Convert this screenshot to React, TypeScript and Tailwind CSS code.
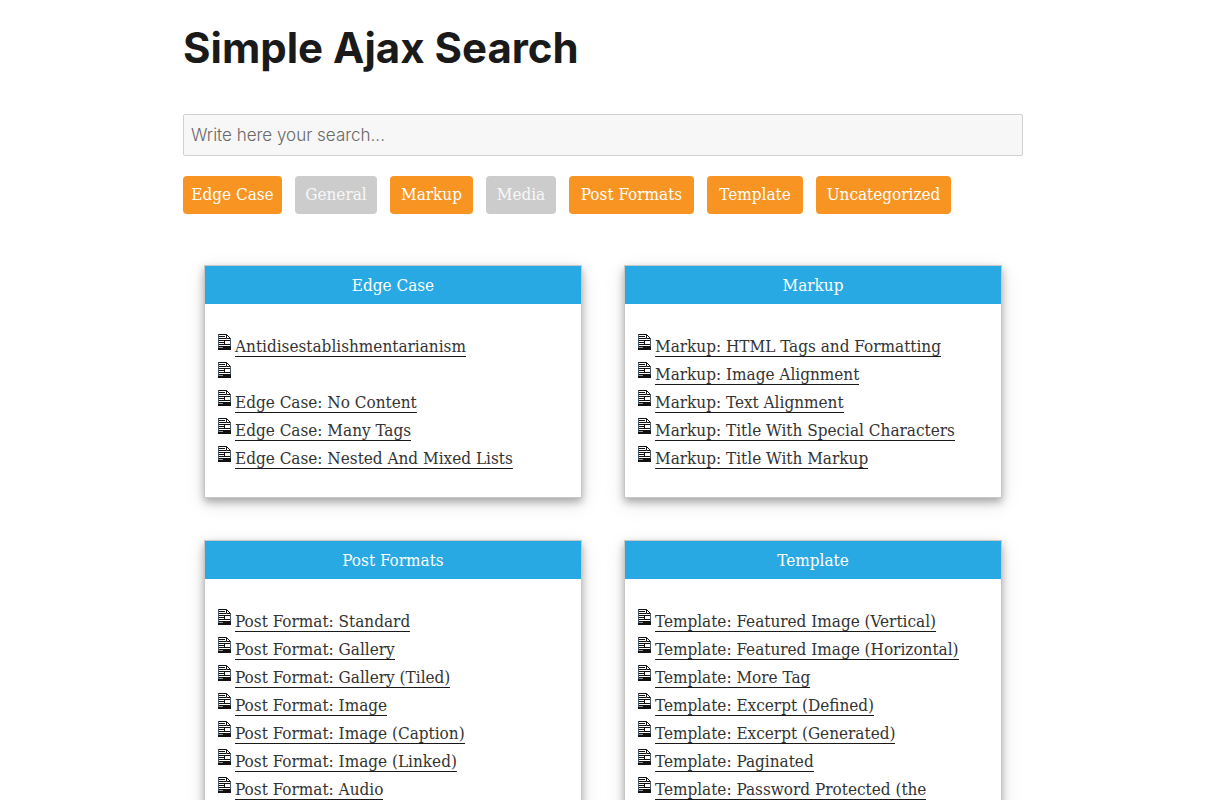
type Tag = { name: string; disabled?: boolean; width: string };

const tags: Tag[] = [
  { name: "Edge Case", width: "min-w-[99px]" },
  { name: "General", disabled: true, width: "min-w-[82px]" },
  { name: "Markup", width: "min-w-[83px]" },
  { name: "Media", disabled: true, width: "min-w-[70px]" },
  { name: "Post Formats", width: "min-w-[125px]" },
  { name: "Template", width: "min-w-[96px]" },
  { name: "Uncategorized", width: "min-w-[135px]" },
];

const groups = [
  {
    title: "Edge Case",
    posts: [
      "Antidisestablishmentarianism",
      "",
      "Edge Case: No Content",
      "Edge Case: Many Tags",
      "Edge Case: Nested And Mixed Lists",
    ],
  },
  {
    title: "Markup",
    posts: [
      "Markup: HTML Tags and Formatting",
      "Markup: Image Alignment",
      "Markup: Text Alignment",
      "Markup: Title With Special Characters",
      "Markup: Title With Markup",
    ],
  },
  {
    title: "Post Formats",
    posts: [
      "Post Format: Standard",
      "Post Format: Gallery",
      "Post Format: Gallery (Tiled)",
      "Post Format: Image",
      "Post Format: Image (Caption)",
      "Post Format: Image (Linked)",
      "Post Format: Audio",
    ],
  },
  {
    title: "Template",
    posts: [
      "Template: Featured Image (Vertical)",
      "Template: Featured Image (Horizontal)",
      "Template: More Tag",
      "Template: Excerpt (Defined)",
      "Template: Excerpt (Generated)",
      "Template: Paginated",
      "Template: Password Protected (the",
    ],
  },
];

function PageIcon() {
  return (
    <svg width="13" height="16" viewBox="0 0 13 16" className="mt-[2px] shrink-0" aria-hidden="true">
      <path d="M0.5 0.5H8.5L12.5 4.5V15.5H0.5Z" fill="#fff" stroke="#4a5a68" />
      <path d="M0.5 0.5H8.5L12.5 4.5" fill="none" stroke="#111" />
      <path d="M8.5 1V4.5H12" fill="none" stroke="#111" />
      <path d="M1 2.5H7M1 4.5H8M1 6.5H12M1 8.5H6M1 10.5H12M1 12.5H12" stroke="#111" />
      <path d="M6.5 7V10" stroke="#111" />
      <path d="M1 13.5H5" stroke="#999" />
      <path d="M5 13.5H13M0 15H13" stroke="#111" strokeWidth="2" />
    </svg>
  );
}

function Card({ title, posts }: { title: string; posts: string[] }) {
  return (
    <section className="border border-[#c8c8c8] bg-white shadow-[0_4px_8px_rgba(0,0,0,0.3),0_6px_20px_rgba(0,0,0,0.1)]">
      <h2 className="bg-[#29a9e3] text-center leading-[38px] text-white">{title}</h2>
      <ul className="px-[13px] pt-7 pb-[25px]">
        {posts.map((post, i) => (
          <li key={i} className="flex h-7 items-start gap-1">
            <PageIcon />
            {post && (
              <a href="#" className="mt-1 border-b border-[#1a1a1a] leading-5 whitespace-nowrap">
                {post}
              </a>
            )}
          </li>
        ))}
      </ul>
    </section>
  );
}

export default function App() {
  return (
    <div className="h-screen overflow-hidden bg-white pr-[14px] font-['DejaVu_Serif_Condensed','DejaVu_Serif',serif] text-[17px] text-[#333]">
      <main className="mx-auto max-w-[840px]">
        <h1 className="pt-6 font-['Inter',sans-serif] text-[42px] leading-[48px] font-bold text-[#1a1a1a]">
          Simple Ajax Search
        </h1>
        <input
          type="search"
          aria-label="Search"
          placeholder="Write here your search..."
          className="mt-[42px] block h-[42px] w-full rounded-[2px] border border-[#d1d1d1] bg-[#f7f7f7] px-[7px] font-['Inter',sans-serif] text-[17px] font-light placeholder:text-[#686868]"
        />
        <div className="mt-5 flex flex-wrap gap-x-[13px] gap-y-3">
          {tags.map((tag) => (
            <button
              key={tag.name}
              type="button"
              className={`h-[38px] rounded-[4px] text-center whitespace-nowrap ${tag.width} ${
                tag.disabled ? "bg-[#ccc] text-[#f8f8f8]" : "bg-[#f89422] text-white"
              }`}
            >
              {tag.name}
            </button>
          ))}
        </div>
        <div className="mt-[51px] grid grid-cols-1 gap-[42px] px-[21px] md:grid-cols-2">
          {groups.map((group) => (
            <Card key={group.title} {...group} />
          ))}
        </div>
      </main>
    </div>
  );
}
